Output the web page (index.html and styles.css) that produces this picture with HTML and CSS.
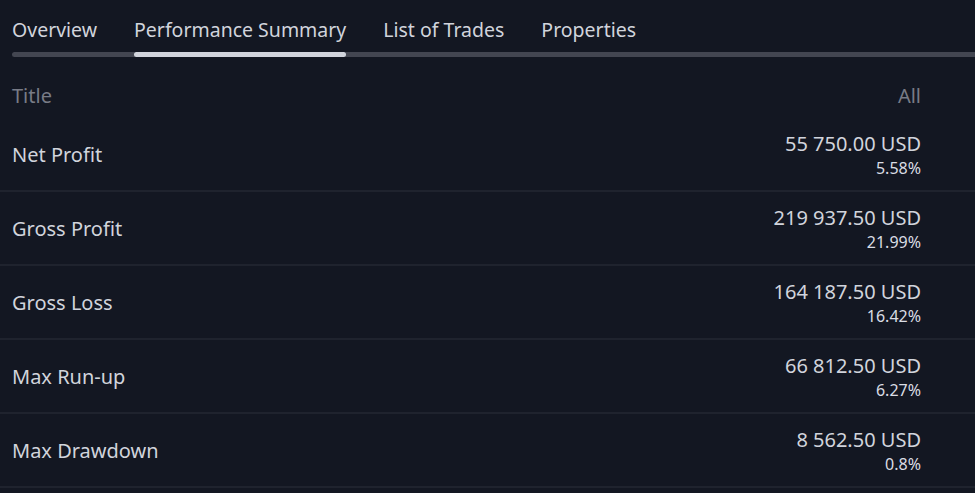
FILE: index.html
```html
<!DOCTYPE html>
<html>
<head>
<meta charset="utf-8">
<link rel="stylesheet" href="styles.css">
</head>
<body>
<div class="page">
  <nav class="tabs">
    <div class="tab">Overview</div>
    <div class="tab active">Performance Summary</div>
    <div class="tab">List of Trades</div>
    <div class="tab">Properties</div>
  </nav>
  <div class="table">
    <div class="head">
      <span>Title</span>
      <span>All</span>
    </div>
    <div class="row">
      <span class="label">Net Profit</span>
      <div class="val"><span class="main">55 750.00 USD</span><span class="pct">5.58%</span></div>
    </div>
    <div class="row">
      <span class="label">Gross Profit</span>
      <div class="val"><span class="main">219 937.50 USD</span><span class="pct">21.99%</span></div>
    </div>
    <div class="row">
      <span class="label">Gross Loss</span>
      <div class="val"><span class="main">164 187.50 USD</span><span class="pct">16.42%</span></div>
    </div>
    <div class="row">
      <span class="label">Max Run-up</span>
      <div class="val"><span class="main">66 812.50 USD</span><span class="pct">6.27%</span></div>
    </div>
    <div class="row">
      <span class="label">Max Drawdown</span>
      <div class="val"><span class="main">8 562.50 USD</span><span class="pct">0.8%</span></div>
    </div>
  </div>
</div>
</body>
</html>
```
FILE: styles.css
```css
html, body {
  margin: 0;
  padding: 0;
  background: #131722;
}
body {
  font-family: "Noto Sans", sans-serif;
  color: #d1d4dc;
  overflow: hidden;
  width: 975px;
  height: 493px;
}
.tabs {
  display: flex;
  gap: 37px;
  padding: 14px 0 0 12px;
  height: 44px;
  box-sizing: content-box;
  position: relative;
}
.tabs::after {
  content: "";
  position: absolute;
  left: 12px;
  right: -10px;
  top: 52px;
  height: 5px;
  border-radius: 3px;
  background: #434651;
}
.tab {
  font-size: 19.5px;
  line-height: 31px;
  position: relative;
  height: 43px;
}
.tab.active::after {
  content: "";
  position: absolute;
  left: 0;
  right: 0;
  top: 38px;
  height: 5px;
  border-radius: 3px;
  background: #d1d4dc;
  z-index: 1;
}
.table {
  margin-top: 27px;
}
.head {
  display: flex;
  justify-content: space-between;
  padding: 0 54px 0 12px;
  color: #787b86;
  font-size: 20px;
  line-height: 22px;
  height: 33px;
}
.row {
  display: flex;
  justify-content: space-between;
  align-items: center;
  padding: 0 54px 0 12px;
  height: 72px;
  border-bottom: 2px solid #1f232e;
}
.label {
  font-size: 20px;
}
.val {
  display: flex;
  flex-direction: column;
  align-items: flex-end;
  margin-top: 2px;
}
.main {
  font-size: 20px;
  line-height: 25px;
}
.pct {
  font-size: 16px;
  line-height: 21px;
  margin-top: 2px;
  color: #dadde4;
}
```
